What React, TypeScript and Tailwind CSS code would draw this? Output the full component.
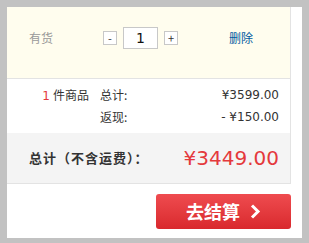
import React from "react";

const cjk = { fontFamily: '"Noto Sans CJK SC", "DejaVu Sans", sans-serif' };
const num = { fontFamily: '"DejaVu Sans", "Noto Sans CJK SC", sans-serif' };

// 数量加减
const QtyBox = () => (
  <div className="flex items-center">
    <button className="w-[14px] h-[14px] border border-[#c8c8c8] bg-white text-[11px] leading-[12px] text-[#333] flex items-center justify-center">
      -
    </button>
    <div
      className="ml-[6px] w-[35px] h-[22px] border border-[#c8c8c8] bg-white text-[14px] text-[#111] flex items-center justify-center"
      style={num}
    >
      1
    </div>
    <button className="ml-[6px] w-[14px] h-[14px] border border-[#c8c8c8] bg-white text-[11px] leading-[12px] text-[#333] flex items-center justify-center">
      +
    </button>
  </div>
);

export default function App() {
  return (
    <div
      className="w-[309px] h-[243px] bg-[#c2c2c2] pt-[7px] pl-[7px] pr-[7px] pb-[5px]"
      style={cjk}
    >
      <div className="h-full bg-white flex flex-col">
        <div className="w-[284px] border-r border-[#e3e3e3]">
          {/* 商品行 */}
          <div className="h-[72px] bg-[#fffdee] border-b border-[#e3e3e3] pt-[21px] text-[12px]">
            <div className="h-[20px] flex items-center">
              <span className="ml-[22px] w-[74px] text-[#999]">有货</span>
              <QtyBox />
              <span className="ml-[51px] text-[#005aa0]">删除</span>
            </div>
          </div>

          {/* 小计 */}
          <div className="h-[54px] pt-[5px] text-[12px] text-[#333]">
            <div className="h-[22px] flex items-center">
              <span className="w-[82px] text-right">
                <span className="text-[#e4393c] mr-[3px]" style={num}>1</span>件商品
              </span>
              <span className="ml-[11px]">总计:</span>
              <span className="ml-auto mr-[11px]" style={num}>¥3599.00</span>
            </div>
            <div className="h-[22px] flex items-center">
              <span className="ml-[93px]">返现:</span>
              <span className="ml-auto mr-[11px]" style={num}>- ¥150.00</span>
            </div>
          </div>

          {/* 总计 */}
          <div className="h-[51px] bg-[#f4f4f4] border-b border-[#e3e3e3] flex items-center">
            <span className="ml-[22px] text-[13px] tracking-[1px] font-bold text-[#333]">总计（不含运费）：</span>
            <span className="ml-auto mr-[11px] text-[20px] text-[#e4393c]" style={num}>
              ¥3449.00
            </span>
          </div>
        </div>

        {/* 结算按钮 */}
        <div className="flex justify-end pr-[11px] pt-[10px]">
          <button className="w-[135px] h-[35px] rounded-[3px] bg-gradient-to-b from-[#ef4b4f] to-[#d9282d] text-white text-[18px] font-bold flex items-center justify-center">
            <span>去结算</span>
            <svg className="ml-[10px]" width="11" height="15" viewBox="0 0 11 15">
              <path d="M2 1.5 L8 7.5 L2 13.5" fill="none" stroke="white" strokeWidth="3" />
            </svg>
          </button>
        </div>
      </div>
    </div>
  );
}
